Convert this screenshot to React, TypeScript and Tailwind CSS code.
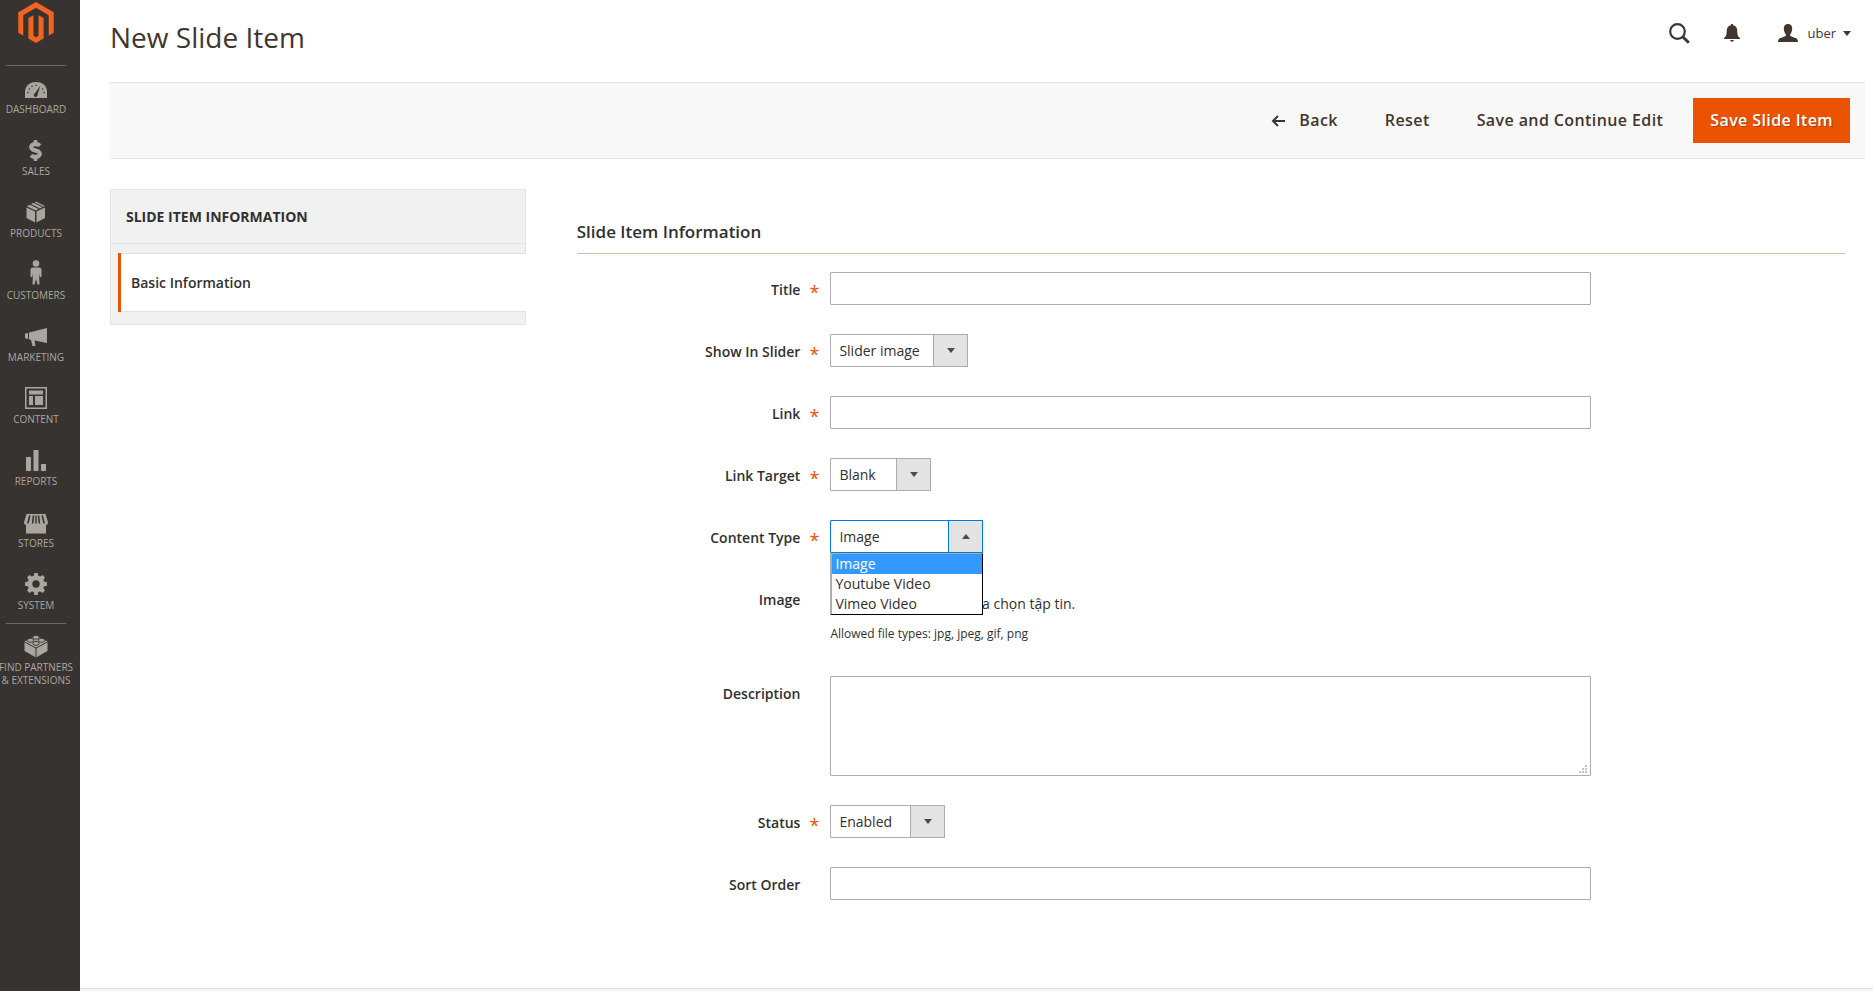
import type { ReactNode } from "react";
import { FaDollarSign } from "react-icons/fa";

const menu: { label: string; icon: ReactNode; divider?: boolean }[] = [
  {
    label: "Dashboard",
    divider: true,
    icon: (
      <>
        <path d="M1 25v-6C1 13 5.500 9 12 9s11 4 11 10v6z" fill="currentColor" />
        <g fill="#373330">
          <path d="M16.500 12.500l-3 9a1.900 1.900 0 1 1-2.500-1.200z" />
          <circle cx="4" cy="19.500" r="0.800" />
          <circle cx="5.300" cy="16" r="0.800" />
          <circle cx="8" cy="13.300" r="0.800" />
          <circle cx="12" cy="12.200" r="0.800" />
          <circle cx="18.700" cy="16" r="0.800" />
          <circle cx="20" cy="19.500" r="0.800" />
        </g>
      </>
    ),
  },
  { label: "Sales", icon: <FaDollarSign x="1" y="5" size={21} stroke="currentColor" strokeWidth="24" /> },
  {
    label: "Products",
    icon: (
      <g fill="currentColor">
        <path d="M2.500 10.500l8.500 4v11L2.500 21z" />
        <path d="M21 10.500l-8.500 4v11L21 21z" />
        <path d="M2.800 9.200l3-1.500 8.900 4.400-3 1.400z" />
        <path d="M7 7l2.300-1.200 8.900 4.400L16 11.400z" />
        <path d="M10.500 5.300L12 4.600l8.800 4.500-1.400.6z" />
      </g>
    ),
  },
  {
    label: "Customers",
    icon: (
      <g fill="currentColor">
        <circle cx="12" cy="4.500" r="3.300" />
        <path d="M9 8.500h6c1.700 0 2.500 1 2.500 2.500v6.500l-1.500 1-.5-4-.3 4.500.3 6.500h-2L12 20l-1.500 5.500h-2l.3-6.500-.3-4.500-.5 4-1.500-1V11c0-1.500.800-2.500 2.500-2.500z" />
      </g>
    ),
  },
  {
    label: "Marketing",
    icon: (
      <g fill="currentColor">
        <path d="M1 12.500l3-.5v6l-3-.8z" />
        <path d="M5 11.500L23 7v15l-12.500-2.600L11.500 25H8.500L7 19l-2-.7z" />
      </g>
    ),
  },
  {
    label: "Content",
    icon: (
      <g fill="currentColor">
        <path fillRule="evenodd" d="M1 4h22v22H1zM2.500 5.500v19h19v-19z" />
        <path d="M5 7.500h14v4H5zM5 13h4v9H5zM11 13h8v9h-8z" />
      </g>
    ),
  },
  {
    label: "Reports",
    icon: <path d="M2 12h5v14H2zM9.500 5h5v21h-5zM17 19h5v7h-5z" fill="currentColor" />,
  },
  {
    label: "Stores",
    icon: (
      <>
        <path d="M2.500 7h19L24 15.500c0 1.500-1 2.500-2 2.500v8.500H2V18c-1 0-2-1-2-2.500z" fill="currentColor" />
        <path
          d="M5.800 8.500l-2 8M9.500 8.500l-.9 8M14.500 8.500l.9 8M18.200 8.500l2 8"
          stroke="#373330"
          strokeWidth="1.600"
        />
        <path d="M12 8.500v8" stroke="#373330" strokeWidth="1.400" />
      </>
    ),
  },
  {
    label: "System",
    icon: (
      <>
        <g fill="currentColor">
          <circle cx="12" cy="15" r="8.500" />
          <path d="M10.300 4h3.400l.8 4h-5zM10.300 26h3.400l.8-4h-5zM1 13.300v3.400l4 .8v-5zM23 13.300v3.400l-4 .8v-5z" />
          <path d="M3 8.400L5.400 6l3.400 2.300-3.500 3.500zM21 8.400L18.600 6l-3.400 2.300 3.500 3.500zM3 21.600L5.400 24l3.400-2.300-3.500-3.500zM21 21.600L18.600 24l-3.400-2.300 3.500-3.500z" />
        </g>
        <circle cx="12" cy="15" r="3.700" fill="#373330" />
      </>
    ),
  },
  {
    label: "Find Partners & Extensions",
    divider: true,
    icon: (
      <>
        <path d="M12 5l11.500 5.500V20L12 26.500.5 20v-9.500z" fill="currentColor" />
        <path d="M.5 11L12 17l11.500-6M12 17v9" stroke="#373330" strokeWidth="1" fill="none" />
        <g fill="currentColor" stroke="#373330" strokeWidth="0.900">
          <ellipse cx="12" cy="6.300" rx="3.200" ry="2" />
          <ellipse cx="6.500" cy="9.300" rx="3.200" ry="2" />
          <ellipse cx="17.500" cy="9.300" rx="3.200" ry="2" />
          <ellipse cx="12" cy="12.300" rx="3.200" ry="2" />
        </g>
      </>
    ),
  },
];

function Sidebar() {
  return (
    <aside className="w-20 shrink-0 overflow-hidden bg-[#373330]">
      <div className="-ml-2 w-[88px]">
        <a href="#home" aria-label="Home" className="flex h-[65px] justify-center pt-0.5">
          <svg viewBox="0 0 448 512" className="h-[41px] w-9" fill="#f26322">
            <path d="M445.700 127.900V384l-63.400 36.500V164.700L223.800 73.100 65.200 164.700l.4 255.900L2.300 384V128.100L224.200 0z" />
            <path d="M255.600 420.500L224 438.900l-31.800-18.200v-256l-63.300 36.600.1 255.900 94.900 54.900 95.100-54.900v-256l-63.400-36.600z" />
          </svg>
        </a>
        <nav>
          <ul>
            {menu.map((m) => (
              <li key={m.label} className="min-h-[62px]">
                <div className={m.divider ? "mx-auto h-px w-[60px] bg-[#736963]" : "h-px"} />
                <a href="#menu" className="flex flex-col items-center pt-[7px] text-[#aaa69f]">
                  <svg viewBox="0 0 24 28" className="h-7 w-6 overflow-visible">
                    {m.icon}
                  </svg>
                  <span className="mt-0.5 w-20 text-center text-[10px] leading-[13px] uppercase">{m.label}</span>
                </a>
              </li>
            ))}
          </ul>
        </nav>
      </div>
    </aside>
  );
}

function Header() {
  return (
    <header className="flex h-[82px] items-start justify-between pr-[14px]">
      <h1 className="pt-[19px] text-[28px] leading-9 text-[#41362f]">New Slide Item</h1>
      <div className="flex h-[66px] items-center text-[#41362f]">
        <button type="button" aria-label="Search" className="mr-[34px]">
          <svg viewBox="0 0 21 21" className="size-[21px]" fill="none" stroke="currentColor">
            <circle cx="8.500" cy="8.500" r="7.300" strokeWidth="2.200" />
            <path d="M13.500 13.500l6.300 6.300" strokeWidth="3" />
          </svg>
        </button>
        <button type="button" aria-label="Notifications" className="mr-[38px]">
          <svg viewBox="0 0 16 18" className="h-[18px] w-4" fill="currentColor">
            <path d="M8 0c.9 0 1.300.5 1.300 1.200C12 2 13.300 4 13.300 7c0 4 .7 5.500 2.700 7v1H0v-1c2-1.500 2.700-3 2.700-7 0-3 1.300-5 4-5.800C6.700.5 7.100 0 8 0z" />
            <path d="M6.200 16h3.600c0 1.200-.8 1.700-1.800 1.700s-1.800-.5-1.800-1.700z" />
          </svg>
        </button>
        <button type="button" className="flex items-center text-[13px] leading-[18px]">
          <svg viewBox="0 0 20 18" className="mr-[9px] h-[18px] w-5" fill="currentColor">
            <path d="M10 0c2.800 0 4.200 1.800 4.200 4.500 0 2.500-.9 4.500-2 5.700v1.600c.5.800 3.300 1.400 5.400 2.200 1.700.7 2.400 1.800 2.400 4H0c0-2.200.7-3.300 2.400-4 2.100-.8 4.900-1.400 5.400-2.200v-1.600c-1.100-1.200-2-3.200-2-5.700C5.800 1.800 7.200 0 10 0z" />
          </svg>
          uber
          <svg viewBox="0 0 8 5" className="ml-[7px] h-[5px] w-2" fill="currentColor">
            <path d="M0 0h8L4 5z" />
          </svg>
        </button>
      </div>
    </header>
  );
}

function Toolbar() {
  return (
    <div className="flex justify-end border-y border-[#e3e3e3] bg-[#f8f8f8] py-[15px] pr-[15px] text-[16px] leading-[21px] font-semibold tracking-wide text-[#41362f]">
      <button type="button" className="mr-[13px] flex h-[45px] items-center px-[17px]">
        <svg viewBox="0 0 14 12" className="mr-[14px] h-3 w-[14px]" fill="none" stroke="currentColor" strokeWidth="2">
          <path d="M14 6H2M7 1L2 6l5 5" />
        </svg>
        Back
      </button>
      <button type="button" className="mr-[13px] h-[45px] px-[17px]">
        Reset
      </button>
      <button type="button" className="mr-[13px] h-[45px] px-[17px]">
        Save and Continue Edit
      </button>
      <button type="button" className="h-[45px] bg-[#eb5202] px-[17px] text-white [text-shadow:1px_1px_0_rgba(0,0,0,0.25)]">
        Save Slide Item
      </button>
    </div>
  );
}

function Tabs() {
  return (
    <div className="border border-[#e3e3e3] bg-[#f1f1f1] text-[14px] leading-5 text-[#303030]">
      <h2 className="border-b border-[#e3e3e3] px-[15px] pt-[17px] pb-4 font-bold uppercase">
        Slide Item Information
      </h2>
      <ul className="-mr-px pt-[9px] pb-3 pl-[7px]">
        <li>
          <a
            href="#basic"
            className="flex h-[59px] items-center border-l-[3px] border-[#eb5202] bg-white font-semibold"
          >
            <span className="flex h-full w-full items-center border-y border-[#e3e3e3] pl-[10px]">
              Basic Information
            </span>
          </a>
        </li>
      </ul>
    </div>
  );
}

type FieldProps = { id: string; label: string; required?: boolean; children: ReactNode };

function Field({ id, label, required, children }: FieldProps) {
  return (
    <div className="flex">
      <div className="flex w-1/5 shrink-0 justify-end">
        <label htmlFor={id} className="pt-2 text-[14px] leading-5 font-semibold">
          {label}
        </label>
        <span className="w-[30px] pt-[10px] pl-[9px] text-[18px] leading-5 text-[#eb5202]">
          {required ? "*" : ""}
        </span>
      </div>
      <div className="w-3/5">{children}</div>
    </div>
  );
}

function TextInput({ id }: { id: string }) {
  return (
    <input
      id={id}
      type="text"
      className="block h-[33px] w-full rounded-[1px] border border-[#adadad] bg-white px-[9px] text-[14px] outline-none"
    />
  );
}

type SelectProps = { id: string; width: string; options: string[]; open?: boolean };

function Select({ id, width, options, open }: SelectProps) {
  const border = open ? "border-[#007bdb]" : "border-[#adadad]";
  return (
    <div className={`relative ${width}`}>
      <select
        id={id}
        className={`block h-[33px] w-full appearance-none rounded-[1px] border bg-white pr-9 pl-2 text-[14px] outline-none ${border}`}
      >
        {options.map((o) => (
          <option key={o}>{o}</option>
        ))}
      </select>
      <span
        className={`pointer-events-none absolute inset-y-0 right-0 flex w-[35px] items-center justify-center border bg-[#e3e3e3] ${border}`}
      >
        <svg viewBox="0 0 8 5" className="h-[5px] w-2" fill="#514943">
          <path d={open ? "M0 5h8L4 0z" : "M0 0h8L4 5z"} />
        </svg>
      </span>
      {open && (
        <ul
          role="listbox"
          aria-label="Content types"
          className="absolute top-full left-0 z-10 w-full border border-t-[#adadad] border-r-black border-b-black border-l-2 border-l-[#adadad] bg-white text-[14px] leading-5"
        >
          {options.map((o, i) => (
            <li
              key={o}
              role="option"
              aria-selected={i === 0}
              className={i === 0 ? "bg-[#3399ff] pl-[3px] text-white" : "pl-[3px]"}
            >
              {o}
            </li>
          ))}
        </ul>
      )}
    </div>
  );
}

function SlideForm() {
  return (
    <form className="text-[#303030]">
      <h2 className="border-b border-[#cac3b4] pt-8 pb-[10px] text-[17px] leading-[22px] font-semibold">
        Slide Item Information
      </h2>
      <div className="mt-[18px] flex flex-col gap-[29px]">
        <Field id="title" label="Title" required>
          <TextInput id="title" />
        </Field>
        <Field id="show" label="Show In Slider" required>
          <Select id="show" width="w-[138px]" options={["Slider image"]} />
        </Field>
        <Field id="link" label="Link" required>
          <TextInput id="link" />
        </Field>
        <Field id="target" label="Link Target" required>
          <Select id="target" width="w-[101px]" options={["Blank"]} />
        </Field>
        <Field id="type" label="Content Type" required>
          <Select id="type" width="w-[153px]" options={["Image", "Youtube Video", "Vimeo Video"]} open />
        </Field>
        <Field id="image" label="Image">
          <div className="relative flex h-8 items-end text-[14px] leading-5">
            <input id="image" type="file" className="sr-only" />
            <span className="w-[125px] shrink-0" />
            <span>Chưa chọn tập tin.</span>
          </div>
          <p className="mt-3 mb-[5px] text-[12px] leading-4">Allowed file types: jpg, jpeg, gif, png</p>
        </Field>
        <Field id="description" label="Description">
          <div className="relative">
            <textarea
              id="description"
              className="block h-[100px] w-full resize-none rounded-[1px] border border-[#adadad] bg-white p-2 text-[14px] outline-none"
            />
            <svg viewBox="0 0 8 8" className="absolute right-1 bottom-[3px] size-2" fill="#c4c4c4">
              <path d="M0 6h2v2H0zM3 6h2v2H3zM6 6h2v2H6zM3 3h2v2H3zM6 3h2v2H6zM6 0h2v2H6z" />
            </svg>
          </div>
        </Field>
        <Field id="status" label="Status" required>
          <Select id="status" width="w-[115px]" options={["Enabled"]} />
        </Field>
        <Field id="sort" label="Sort Order">
          <TextInput id="sort" />
        </Field>
      </div>
    </form>
  );
}

export default function App() {
  return (
    <div className="flex min-h-screen bg-white font-['Open_Sans',sans-serif]">
      <Sidebar />
      <div className="flex min-w-0 flex-1 flex-col">
        <div className="flex-1 pr-2 pl-[30px]">
          <Header />
          <Toolbar />
          <main className="flex pt-[30px]">
            <div className="w-1/4 shrink-0 pr-[23px]">
              <Tabs />
            </div>
            <div className="min-w-0 flex-1 pr-5 pl-7">
              <SlideForm />
            </div>
          </main>
        </div>
        <footer className="h-[3px] border-t border-[#dcdcdc] bg-[#f5f5f5]" />
      </div>
    </div>
  );
}
